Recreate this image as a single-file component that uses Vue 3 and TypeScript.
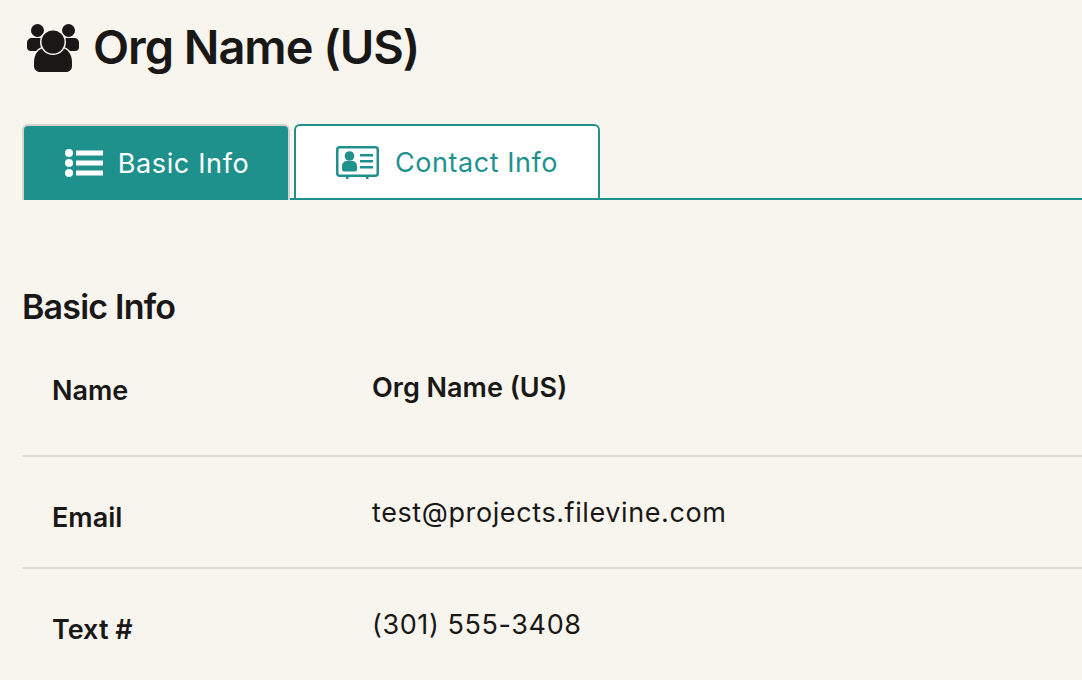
<script setup lang="ts">
interface Row { label: string; value: string; strong?: boolean }
const rows: Row[] = [
  { label: 'Name', value: 'Org Name (US)', strong: true },
  { label: 'Email', value: 'test@projects.filevine.com' },
  { label: 'Text #', value: '(301) 555-3408' },
]
</script>

<template>
  <main class="page">
    <header class="title">
      <svg class="people" viewBox="0 0 52 48" aria-hidden="true">
        <circle cx="10.500" cy="6.500" r="6.500" />
        <circle cx="41.500" cy="6.500" r="6.500" />
        <path d="M5 14h8c3 0 5 2 5 5v8H4c-2.500 0-4-1.500-4-4v-4c0-3 2-5 5-5z" />
        <path d="M47 14h-8c-3 0-5 2-5 5v8h14c2.500 0 4-1.500 4-4v-4c0-3-2-5-5-5z" />
        <path class="cut" d="M7 38c0-8 5-14 11-14h16c6 0 11 6 11 14v4c0 3.500-2.500 6-6 6H13c-3.500 0-6-2.500-6-6z" />
        <circle class="cut" cx="26" cy="18" r="11.500" />
      </svg>
      <h1>Org Name (US)</h1>
    </header>

    <nav class="tabs">
      <button class="tab active" type="button">
        <svg class="tab-icon list" viewBox="0 0 38 28" aria-hidden="true">
          <circle cx="4" cy="4" r="4" />
          <circle cx="4" cy="14" r="4" />
          <circle cx="4" cy="24" r="4" />
          <rect x="11" y="1.500" width="27" height="5" />
          <rect x="11" y="11.500" width="27" height="5" />
          <rect x="11" y="21.500" width="27" height="5" />
        </svg>
        <span>Basic Info</span>
      </button>
      <button class="tab" type="button">
        <svg class="tab-icon card" viewBox="0 0 43 33" aria-hidden="true">
          <rect class="outline" x="1.250" y="1.250" width="40.500" height="28.500" rx="2.500" />
          <rect x="10" y="30" width="2.500" height="3" />
          <rect x="30" y="30" width="2.500" height="3" />
          <circle cx="13.500" cy="10" r="4.800" />
          <path d="M6 23.500V20c0-3 2.300-5 5-5h5c2.700 0 5 2 5 5v3.500c0 1.100-.9 2-2 2H8c-1.100 0-2-.9-2-2z" />
          <rect x="24" y="8" width="13" height="2.500" />
          <rect x="24" y="14" width="13" height="2.500" />
          <rect x="24" y="20" width="13" height="2.500" />
        </svg>
        <span>Contact Info</span>
      </button>
    </nav>

    <section class="info">
      <h2>Basic Info</h2>
      <div v-for="row in rows" :key="row.label" class="row" :class="{ first: row.strong }">
        <div class="label">{{ row.label }}</div>
        <div class="value" :class="{ strong: row.strong }">{{ row.value }}</div>
      </div>
    </section>
  </main>
</template>

<style scoped>
.page {
  height: 680px;
  overflow: hidden;
  box-sizing: border-box;
  padding: 18px 0 0 22px;
  background: #f8f5ef;
  color: #1a1816;
  font-family: Inter, "Liberation Sans", Arial, sans-serif;
}
.title {
  display: flex;
  align-items: center;
  gap: 15px;
  height: 60px;
  margin-bottom: 46px;
}
.people {
  width: 52px;
  height: 48px;
  margin-left: 5px;
  margin-top: -1px;
  fill: #1a1816;
}
.cut {
  stroke: #f8f5ef;
  stroke-width: 3;
  paint-order: stroke;
}
h1 {
  margin: -3px 0 0 -1px;
  font-size: 47px;
  font-weight: 600;
  letter-spacing: -1.05px;
}
.tabs {
  display: flex;
  gap: 4px;
  align-items: flex-start;
  height: 76px;
  box-sizing: border-box;
  border-bottom: 2px solid #1f918d;
}
.tab {
  display: flex;
  align-items: center;
  justify-content: center;
  box-sizing: border-box;
  height: 74px;
  padding: 0;
  border: 2px solid #1f918d;
  border-bottom: 0;
  border-radius: 6px 6px 0 0;
  background: #fff;
  color: #1f918d;
  font: 400 27px Inter, "Liberation Sans", Arial, sans-serif;
  letter-spacing: 0.55px;
  width: 306px;
  gap: 16px;
}
.tab.active {
  width: 268px;
  height: 76px;
  padding-left: 2px;
  background: #1f918d;
  border-color: #d5d3cd;
  color: #fff;
  gap: 15px;
  letter-spacing: 0.65px;
}
.tab-icon {
  fill: currentColor;
  flex: none;
}
.list { width: 38px; height: 28px; }
.card { width: 43px; height: 33px; }
.outline {
  fill: none;
  stroke: currentColor;
  stroke-width: 2.500;
}
h2 {
  margin: 84px 0 0;
  font-size: 34px;
  line-height: 46px;
  font-weight: 600;
  letter-spacing: -0.8px;
}
.row {
  display: grid;
  grid-template-columns: 320px 1fr;
  box-sizing: border-box;
  height: 112px;
  padding: 35px 30px 0;
  border-top: 2px solid #dedcd6;
  font-size: 27px;
  line-height: 36px;
}
.row.first {
  height: 125px;
  border-top: 0;
  padding-top: 38px;
}
.label { font-weight: 600; padding-top: 8px; }
.row.first .label { padding-top: 5px; }
.value {
  letter-spacing: 0.6px;
  padding-top: 3px;
}
.value.strong {
  font-weight: 600;
  letter-spacing: 0;
  padding-top: 2px;
}
</style>
